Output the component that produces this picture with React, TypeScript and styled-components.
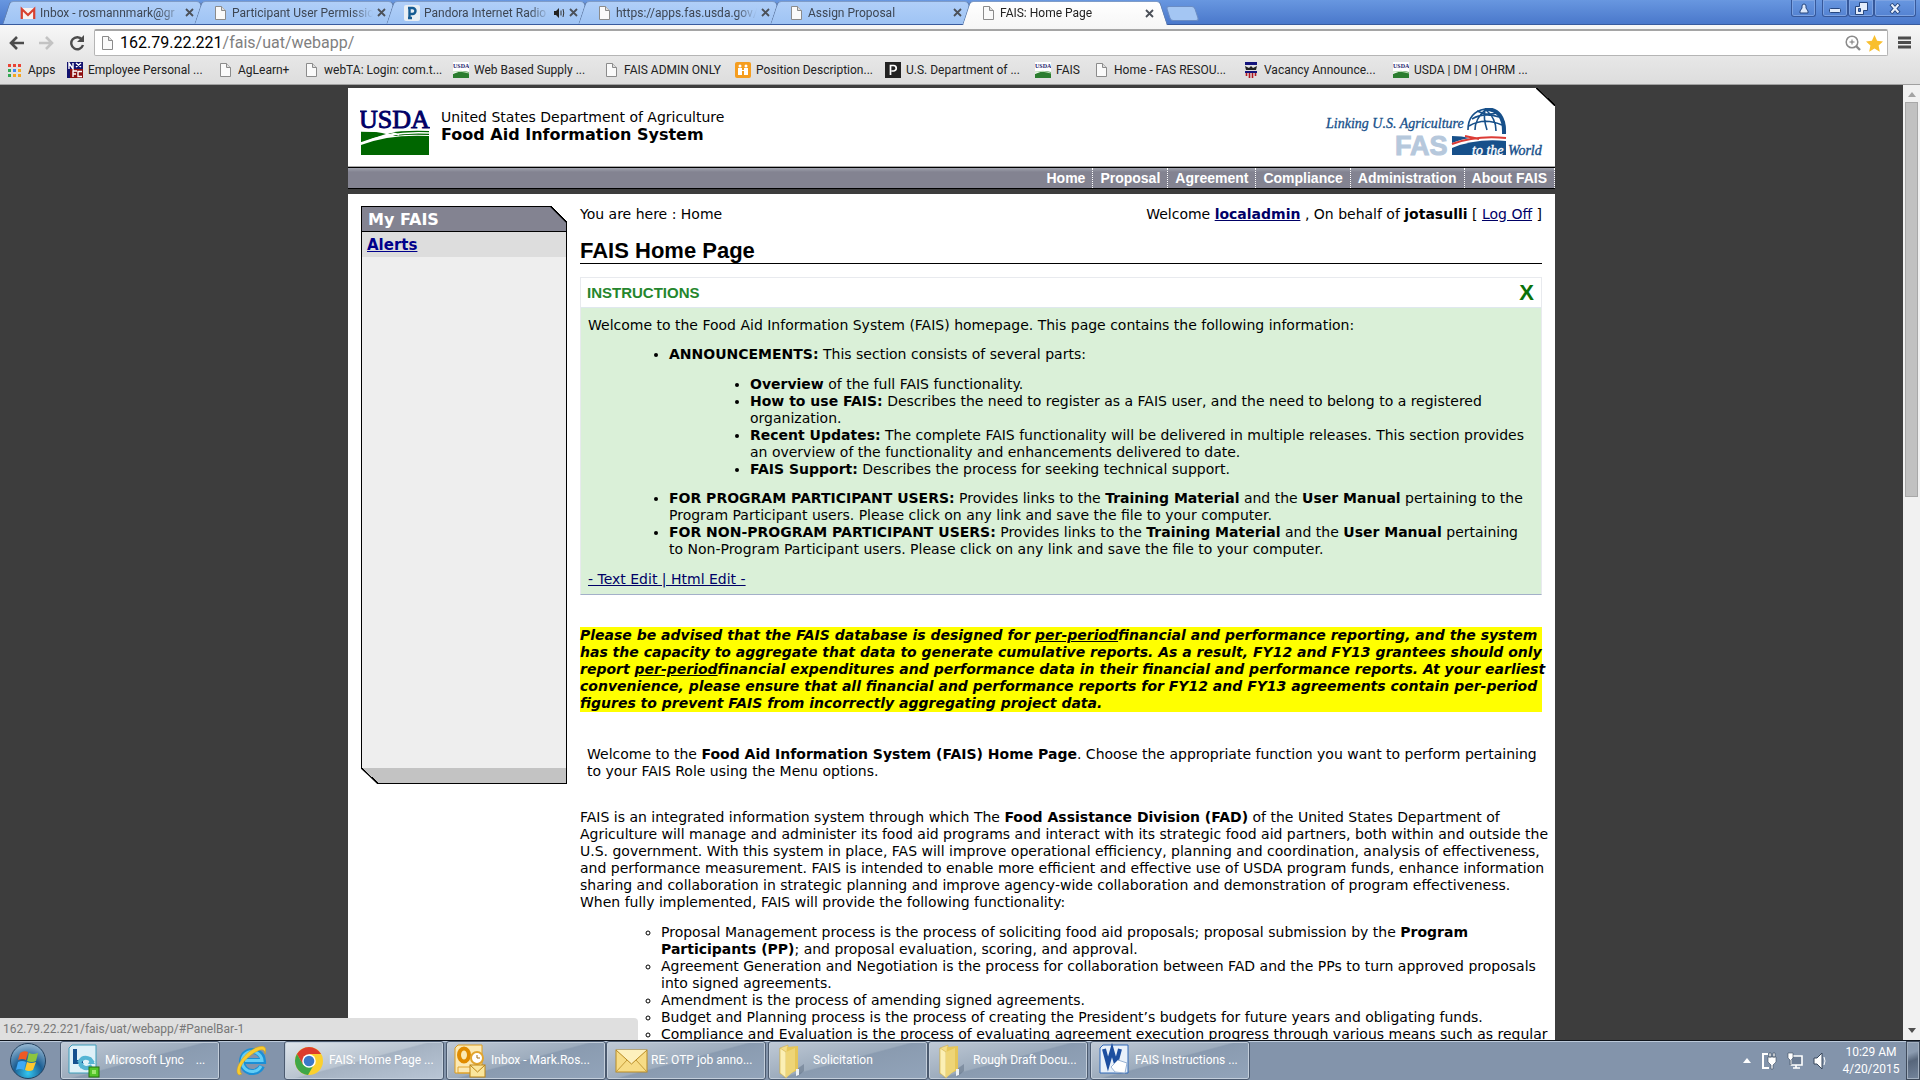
import React from 'react';
import styled, { createGlobalStyle, css } from 'styled-components';

const ui = 'Roboto, "Open Sans", sans-serif';
const verdana = '"DejaVu Sans", Verdana, sans-serif';
const arial = '"Liberation Sans", Arial, sans-serif';

const GlobalStyle = createGlobalStyle`
  * { box-sizing: border-box; }
  body { margin: 0; background: #3d3d3d; color: #000; overflow: hidden; }
  button { border: 0; padding: 0; margin: 0; background: none; font: inherit; color: inherit; }
  svg { display: block; flex: none; }
`;

const Desktop = styled.div`
  display: grid;
  grid-template-rows: auto minmax(0, 1fr) auto;
  height: 100vh;
`;

/* ---------- browser frame ---------- */
const TitleBar = styled.div`
  display: flex;
  justify-content: space-between;
  align-items: flex-start;
  height: 25px;
  padding-left: 6px;
  background: linear-gradient(#6897e0, #4a78cb);
  border-bottom: 1px solid #385b9e;
`;
const TabStrip = styled.div`
  display: flex;
  padding-top: 1px;
`;
const Tab = styled.button<{ $active?: boolean }>`
  position: relative;
  display: flex;
  align-items: center;
  width: 192px;
  height: ${p => (p.$active ? 24 : 23)}px;
  padding: 0 4px 0 14px;
  gap: 4px;
  z-index: ${p => (p.$active ? 2 : 0)};
  font: 12px ${ui};
  color: ${p => (p.$active ? '#222' : '#3d4653')};
  text-align: left;
  &::before, &::after {
    content: '';
    position: absolute;
    z-index: -1;
    top: 0;
    bottom: 0;
    width: 53%;
    background: ${p => (p.$active ? 'linear-gradient(#fff, #f7f7f7)' : 'linear-gradient(#b0cff8, #9fc4f4)')};
    border-top: 1px solid #7f9cc8;
  }
  &::before { left: 0; border-left: 1px solid #6580ab; border-radius: 4px 0 0 0; transform: skewX(-18deg); }
  &::after { right: -6px; border-right: 1px solid #6580ab; border-radius: 0 4px 0 0; transform: skewX(18deg); }
`;
const TabLabel = styled.span`
  flex: 1;
  overflow: hidden;
  white-space: nowrap;
  mask-image: linear-gradient(to right, #000 85%, transparent);
`;
const NewTab = styled.button`
  width: 29px;
  height: 15px;
  margin: 5px 0 0 10px;
  background: #a4c6f3;
  border: 1px solid #6a8cc4;
  border-radius: 3px;
  transform: skewX(18deg);
`;
const WindowButtons = styled.div`
  display: flex;
  padding-right: 4px;
`;
const WindowButton = styled.button<{ $w: number; $gap?: boolean }>`
  display: grid;
  place-items: center;
  width: ${p => p.$w}px;
  height: 17px;
  margin-right: ${p => (p.$gap ? 6 : 0)}px;
  border: 1px solid #36589a;
  border-top: 0;
  border-radius: 0 0 3px 3px;
  box-shadow: inset 0 0 0 1px #7da3e2;
`;
const Toolbar = styled.div`
  display: flex;
  align-items: center;
  height: 34px;
  padding: 1px 1px 0 5px;
  background: linear-gradient(#f7f7f7, #e6e6e6);
`;
const ToolButton = styled.button`
  display: grid;
  place-items: center;
  width: 29px;
  height: 26px;
`;
const NavButtons = styled.div`
  display: flex;
  gap: 2px;
  button:first-child { width: 24px; }
`;
const Omnibox = styled.label`
  display: flex;
  align-items: center;
  flex: 1;
  height: 27px;
  margin: 0 2px 0 3px;
  padding: 0 4px;
  gap: 5px;
  background: #fff;
  border: 1px solid #b5b5b5;
  border-top: 2px solid #a5a5a5;
  border-radius: 2px;
`;
const Address = styled.div`
  flex: 1;
  font: 16px/24px ${ui};
  color: #808080;
  outline: 0;
  b { font-weight: 400; color: #000; }
`;
const Bookmarks = styled.nav`
  display: flex;
  height: 26px;
  padding-left: 7px;
  background: linear-gradient(#e6e6e6, #dddddd);
  border-bottom: 1px solid #a0a0a0;
`;
const Bookmark = styled.a<{ $w: number }>`
  display: flex;
  align-items: center;
  gap: 5px;
  width: ${p => p.$w}px;
  height: 22px;
  font: 12px ${ui};
  color: #222;
  white-space: nowrap;
  text-decoration: none;
`;

/* ---------- viewport ---------- */
const Viewport = styled.div`
  display: flex;
  position: relative;
  background: #3d3d3d;
  overflow: hidden;
`;
const Canvas = styled.div`
  flex: 1;
  padding-top: 3px;
  overflow: hidden;
`;
const Scrollbar = styled.div`
  display: flex;
  flex-direction: column;
  align-items: center;
  width: 17px;
  padding: 7px 1px;
  background: #f1f1f1;
`;
const ScrollThumb = styled.div`
  align-self: stretch;
  height: 42%;
  margin: 5px 1px auto;
  background: #c1c1c1;
  border: 1px solid #a8a8a8;
`;
const Triangle = styled.i<{ $down?: boolean }>`
  border: 4px solid transparent;
  ${p => (p.$down ? 'border-top: 5px solid #505050; border-bottom: 0;' : 'border-bottom: 5px solid #a3a3a3; border-top: 0;')}
`;
const StatusBubble = styled.div`
  position: absolute;
  left: 0;
  bottom: 0;
  width: 638px;
  height: 22px;
  padding-left: 3px;
  background: #dfdfdf;
  border-radius: 0 4px 0 0;
  font: 12px/22px ${ui};
  color: #777;
`;
const Site = styled.div`
  max-width: 1207px;
  margin: 0 auto;
  font: 14px/17px ${verdana};
`;
const Header = styled.header`
  display: flex;
  justify-content: space-between;
  align-items: flex-start;
  height: 79px;
  padding: 20px 12px 0;
  background:
    linear-gradient(to bottom left, #3d3d3d calc(50% - 1px), #000 calc(50% - 1px), #000 50%, #fff calc(50% + 1px)) top right / 19px 18px no-repeat,
    #fff;
  border-bottom: 1px solid #aaa;
`;
const Brand = styled.div`
  display: flex;
  gap: 11px;
`;
const BrandText = styled.div`
  font-size: 14px;
  line-height: 18px;
  strong { display: block; font-size: 16px; }
`;
const SiteNav = styled.nav`
  display: flex;
  justify-content: flex-end;
  height: 22px;
  background: linear-gradient(#a0a3ae, #838391 4px);
  border: solid #000;
  border-width: 1px 0;
  a {
    padding: 0 7px;
    border-right: 1px dotted #fff;
    font: bold 14px/20px ${arial};
    color: #fff;
    text-decoration: none;
  }
`;
const Body = styled.div`
  display: grid;
  grid-template-columns: 206px minmax(0, 1fr);
  align-items: start;
  gap: 13px;
  min-height: 900px;
  margin-top: 5px;
  padding: 12px 13px 12px;
  background: #fff;
`;
const Panel = styled.aside`
  display: flex;
  flex-direction: column;
  height: 578px;
  font-weight: bold;
`;
const PanelTitle = styled.h2`
  margin: 0;
  padding: 5px 6px 0;
  height: 26px;
  border: 1px solid #000;
  font-size: 16px;
  line-height: 18px;
  color: #fff;
  border-right: 0;
  border-top: 0;
  background:
    linear-gradient(to bottom left, #fff calc(50% - 1px), #000 calc(50% - 1px), #000 50%, transparent calc(50% + 1px)) top right / 17px 17px no-repeat,
    linear-gradient(#000, #000) top left / calc(100% - 17px) 1px no-repeat,
    linear-gradient(#000, #000) bottom right / 1px 9px no-repeat,
    #838391;
`;
const PanelBody = styled.div`
  flex: 1;
  border: solid #000;
  border-width: 0 1px;
  background: #eee;
  a {
    display: block;
    height: 25px;
    padding-left: 5px;
    background: #ddd;
    font-size: 15px;
    line-height: 26px;
    color: #00008b;
  }
`;
const PanelFoot = styled.div`
  height: 16px;
  background:
    linear-gradient(to bottom left, transparent calc(50% - 1px), #000 calc(50% - 1px), #000 50%, #fff calc(50% + 1px)) top left / 17px 16px no-repeat,
    linear-gradient(#000, #000) bottom right / calc(100% - 17px) 1px no-repeat,
    linear-gradient(#000, #000) top right / 1px 100% no-repeat,
    #c3c3c3;
`;
const linkColor = css`a { color: #000066; }`;
const Crumbs = styled.div`
  display: flex;
  justify-content: space-between;
  ${linkColor}
`;
const Title = styled.h1`
  margin: 13px 0 13px;
  height: 28px;
  border-bottom: 1px solid #000;
  font: bold 22px/30px ${arial};
`;
const Instructions = styled.section`
  border: 1px solid #e8eaee;
  border-bottom: 1px solid #a3b0c8;
  background: #daf0d8;
`;
const InstructionsHead = styled.div`
  display: flex;
  justify-content: space-between;
  align-items: center;
  height: 30px;
  padding: 0 7px 0 6px;
  background: #fff;
  border-bottom: 1px solid #dfe8ee;
  color: #25862d;
  h2 { margin: 0; font: bold 15px/20px ${arial}; }
  button { font: bold 22px/22px ${arial}; color: #0a720a; }
`;
const InstructionsBody = styled.div`
  padding: 9px 7px 6px;
  ${linkColor}
`;
const List = styled.ul<{ $hollow?: boolean; $nested?: boolean }>`
  margin: ${p => (p.$nested ? '13px 0 12px' : p.$hollow ? '12px -10px 13px 0' : '12px 0 13px')};
  padding-left: 81px;
  list-style: ${p => (p.$hollow ? 'circle' : 'disc')};
`;
const Paragraph = styled.p<{ $inset?: boolean }>`
  margin: ${p => (p.$inset ? '34px 0 29px 7px' : '0 -10px 13px 0')};
`;
const Notice = styled.p`
  margin: 32px -6px 34px 0;
  background: linear-gradient(#ff0, #ff0) 0 0 / calc(100% - 6px) 100% no-repeat;
  font-weight: bold;
  font-style: italic;
`;

/* ---------- taskbar ---------- */
const Taskbar = styled.footer`
  display: flex;
  height: 40px;
  background: #8394ab;
  border-top: 1px solid #10151d;
  box-shadow: inset 0 1px 0 #bccadb;
  font: 12px/17px ${ui};
  color: #fff;
`;
const Launcher = styled.button<{ $wide?: boolean }>`
  display: grid;
  place-items: center;
  width: ${p => (p.$wide ? 62 : 60)}px;
  padding-right: ${p => (p.$wide ? 2 : 4)}px;
`;
const TaskButton = styled.button<{ $active?: boolean; $grouped?: boolean }>`
  display: flex;
  align-items: center;
  gap: 2px;
  width: 160px;
  margin-right: ${p => (p.$grouped ? 0 : 2)}px;
  padding-left: 6px;
  border: 1px solid #4b5a6f;
  border-radius: 3px;
  box-shadow: inset 0 0 0 1px #c3cedb;
  white-space: pre;
  background: ${p =>
    p.$active
      ? 'linear-gradient(165deg, #dfe5eb 0, #b9c4d0 48%, #a5b2c2 50%, #b8c5d5 100%)'
      : 'linear-gradient(165deg, #c0cad6 0, #9dacbd 48%, #8a9bb0 50%, #92a4ba 100%)'};
`;
const Tray = styled.div`
  display: flex;
  align-items: center;
  gap: 10px;
  margin-left: auto;
`;
const Clock = styled.div`
  width: 64px;
  text-align: center;
`;
const ShowDesktop = styled.button`
  align-self: stretch;
  width: 14px;
  margin-left: -7px;
  border: 1px solid #3e4a5b;
  box-shadow: inset 0 0 0 1px #a3b0c0;
  background: linear-gradient(160deg, #8b9bb0 0 30%, #57667b 50%, #74859c);
`;

/* ---------- icons ---------- */
const PageIcon = () => (
  <svg width="16" height="16" viewBox="0 0 16 16"><path d="M3.500 1.500h6l4 4v9h-10z" fill="#fafafa" stroke="#8b8b8b" /><path d="M9.500 1.500v4h4" fill="#ddd" stroke="#8b8b8b" /></svg>
);
const GmailIcon = () => (
  <svg width="16" height="16" viewBox="0 0 16 16"><path d="M1 3h14v11H1z" fill="#f5f1f0" /><path d="M1.800 14V4l6.200 6 6.200-6v10" fill="none" stroke="#d8402f" strokeWidth="2.200" /></svg>
);
const PandoraIcon = () => (
  <svg width="16" height="16" viewBox="0 0 16 16"><rect width="16" height="16" rx="2" fill="#e8eef4" /><path d="M5.500 13V3h3a3 3 0 0 1 0 6h-3M4 13h4M4 3h2" fill="none" stroke="#155b92" strokeWidth="2.400" /></svg>
);
const UsdaIcon = () => (
  <svg width="16" height="16" viewBox="0 0 16 16"><rect width="16" height="16" fill="#fff" /><text x="0" y="6" fontSize="6" fontWeight="bold" fontFamily="Liberation Serif" fill="#1b1b6d">USDA</text><path d="M0 12q8-4 16-2v6H0z" fill="#2b7d2f" /><path d="M0 10q8-2 16 1" stroke="#b6dcb0" fill="none" /></svg>
);
const NfcIcon = () => (
  <svg width="16" height="16" viewBox="0 0 16 16"><rect width="16" height="16" fill="#12126e" /><path d="M3 7h13v9H3z" fill="#8d1010" /><path d="M2 7V1l4 6V1M6 15V9h4M6 12h3M15 9.500h-4v5h4M9 1l5 4M9 5l5-4" stroke="#fff" strokeWidth="1.400" fill="none" /></svg>
);
const PositionIcon = () => (
  <svg width="16" height="16" viewBox="0 0 16 16"><rect width="16" height="16" rx="2" fill="#f59d1f" /><circle cx="5" cy="4" r="1.500" fill="#fff" /><circle cx="11" cy="4" r="1.500" fill="#fff" /><path d="M3 6h4v7H3zM9 6h4v7H9zM6 8h4v1H6z" fill="#fff" /></svg>
);
const DarkPIcon = () => (
  <svg width="16" height="16" viewBox="0 0 16 16"><rect width="16" height="16" fill="#222" /><path d="M5.500 13V3.500h3a2.500 2.500 0 0 1 0 5.500h-2" fill="none" stroke="#fff" strokeWidth="1.700" /></svg>
);
const EagleIcon = () => (
  <svg width="16" height="16" viewBox="0 0 16 16"><path d="M2 0h12v3H2z" fill="#14147c" /><path d="M2 4l4 2 2-2 2 2 4-2-1 4H3z" fill="#222" /><path d="M2 9h12v2H2z" fill="#14147c" /><path d="M3.500 11v3M6.500 11v5M9.500 11v5M12.500 11v3" stroke="#b01622" strokeWidth="1.600" /></svg>
);
const AppsIcon = () => (
  <svg width="16" height="16" viewBox="0 0 16 16">
    {['#e94335', '#e94335', '#e94335', '#34a853', '#4285f4', '#f5a623', '#34a853', '#f5a623', '#f5a623'].map((c, i) => (
      <rect key={i} x={1 + (i % 3) * 5} y={2 + Math.floor(i / 3) * 5} width="3" height="3" fill={c} />
    ))}
  </svg>
);
const CloseIcon = () => (
  <svg width="9" height="9" viewBox="0 0 9 9"><path d="M1 1l7 7M8 1l-7 7" stroke="#4b5058" strokeWidth="1.800" /></svg>
);
const SpeakerIcon = () => (
  <svg width="12" height="12" viewBox="0 0 12 12"><path d="M1 4h2l3-3v10L3 8H1z" fill="#222" /><path d="M8 3.500v5M10 2q1.500 4 0 8" stroke="#333" fill="none" /></svg>
);
const FolderIcon = () => (
  <svg width="36" height="36" viewBox="0 0 36 36"><path d="M22 34l7-6v-7l-7 5z" fill="#5f6f84" opacity=".5" /><path d="M5 5l8-3v26l-8 3z" fill="#f3dd8a" stroke="#cfae4d" strokeWidth=".6" /><path d="M12 4l11-1v24l-13 6-1-2z" fill="#e6c658" /><path d="M5 5l6 4v26l-6-5z" fill="#fbefb5" stroke="#d0ae47" strokeWidth=".6" /><path d="M11 9l9-4v22l-9 8z" fill="#eed577" /><path d="M21 26h3v6l-3 1z" fill="#eef2f6" /></svg>
);
const Envelope = () => (
  <svg width="36" height="36" viewBox="0 0 36 36"><rect x="3" y="7" width="31" height="22" fill="#f7dc86" stroke="#b88b24" /><path d="M3 29l11-12M34 29L23 17" stroke="#c59c3a" /><path d="M3 7l15.500 14L34 7" fill="#fdf0bd" stroke="#b88b24" /></svg>
);
const LyncIcon = () => (
  <svg width="36" height="36" viewBox="0 0 36 36"><path d="M5 2h24v28H2V5z" fill="#dff1f8" stroke="#3c9dba" /><path d="M8 6v13h8" stroke="#15508f" strokeWidth="4" fill="none" /><path d="M12 20q4-8 11-4l3 4M13 21q5 7 12 2" stroke="#55b5d4" strokeWidth="4" fill="none" /><path d="M24 15l4 6h-7zM14 26l-3-6h6z" fill="#55b5d4" /><rect x="22" y="24" width="10" height="10" fill="#53c52a" stroke="#247110" /><rect x="25" y="27" width="4" height="4" fill="#9ce66f" /></svg>
);
const OutlookIcon = () => (
  <svg width="36" height="36" viewBox="0 0 36 36"><path d="M5 2h24v28H2V5z" fill="#fbe9b4" stroke="#dc9b1d" /><ellipse cx="11" cy="12" rx="5" ry="6.500" fill="none" stroke="#e08b00" strokeWidth="4" /><path d="M5 24h13v6H5z" fill="none" stroke="#e2a52f" /><circle cx="24" cy="15" r="6" fill="#fff" stroke="#e2a52f" strokeWidth="2" /><path d="M24 12v3h3" stroke="#a76c0e" fill="none" /><rect x="17" y="22" width="15" height="12" fill="#fbe69c" stroke="#bb8416" /><path d="M17 22l7.500 7 7.500-7" fill="none" stroke="#bb8416" /></svg>
);
const WordIcon = () => (
  <svg width="36" height="36" viewBox="0 0 36 36"><path d="M6 2h25v28H3V5z" fill="#e9f1fa" stroke="#2f68b8" /><path d="M7 6l4 15 4-14 4 14 4-15" fill="none" stroke="#1d4fa0" strokeWidth="4" /><path d="M21 17l9 3-2 10-10-1-4-5z" fill="#fff" stroke="#9ab3d4" /></svg>
);
const ChromeIcon = () => (
  <svg width="36" height="36" viewBox="-2 -2 36 36"><circle cx="16" cy="16" r="14" fill="#fbd02e" /><path d="M16 9h12.100A14 14 0 0 0 3.900 9l6 10.500z" fill="#dd3b2d" /><path d="M3.900 9A14 14 0 0 0 15 30l6-10.500-11 0z" fill="#3fa648" /><circle cx="16" cy="16" r="6.800" fill="#fff" /><circle cx="16" cy="16" r="5.300" fill="#3c79c9" /></svg>
);
const IeIcon = () => (
  <svg width="36" height="36" viewBox="0 0 36 36"><path d="M28 23a10.500 10.500 0 1 1 1-5H11" fill="none" stroke="#1b8fd6" strokeWidth="6" /><path d="M27 23a10 10 0 1 1 1-5.500H11" fill="none" stroke="#63cdf5" strokeWidth="3" /><path d="M5 32C-2 28 10 8 24 4q10-3 7 7c0-6-5-5-11-1C9 17 3 27 8 31z" fill="#f8cb2f" stroke="#d59d11" strokeWidth=".5" /></svg>
);
const StartOrb = () => (
  <svg width="38" height="38" viewBox="0 0 38 38">
    <defs><radialGradient id="orb" cx=".5" cy=".85" r=".9"><stop offset="0" stopColor="#33c7f0" /><stop offset=".45" stopColor="#1c5f94" /><stop offset="1" stopColor="#a9c5dc" /></radialGradient></defs>
    <circle cx="19" cy="19" r="17.500" fill="url(#orb)" stroke="#23415f" />
    <path d="M11 11q4-3 8-1l-2 8q-4-2-8 0z" fill="#ee5a24" /><path d="M20 11q4 2 9 0l-2 8q-4 2-9 0z" fill="#8dc63f" /><path d="M9 20q4-2 8 0l-2 8q-4-2-8 0z" fill="#3fa9f5" /><path d="M18 20q4 2 9 0l-3 8q-4 2-8 0z" fill="#fdc82f" />
  </svg>
);
const UsdaLogo = () => (
  <svg width="70" height="48" viewBox="0 0 70 48" role="img" aria-label="USDA">
    <text x="-1" y="20" fontFamily="Liberation Serif" fontSize="26" fill="#000066" stroke="#000066" strokeWidth=".9">USDA</text>
    <path d="M1 23q16 0 25 3-10 3-25 9z" fill="#006600" /><path d="M28 25q16-3 41-2v4q-20-1-34 1z" fill="#006600" />
    <path d="M1 23q30 0 38 4M1 35q30-12 68-10" stroke="#fff" fill="none" strokeWidth="1.500" />
    <path d="M1 37q28-11 68-9v19H1z" fill="#006600" />
  </svg>
);
const FasLogo = () => (
  <svg width="218" height="48" viewBox="0 0 218 48" role="img" aria-label="Linking U.S. Agriculture to the World">
    <g fontFamily="Liberation Serif" fontStyle="italic" fill="#17508a">
      <text x="1" y="20" fontSize="14" stroke="#17508a" strokeWidth=".3">Linking U.S. Agriculture</text>
    </g>
    <text x="70" y="47" fontFamily="Liberation Sans" fontWeight="bold" fontSize="27" fill="#b6c8dc" stroke="#b6c8dc">FAS</text>
    <g fill="none" stroke="#17508a">
      <path d="M143 22Q143 4 160 1q21 1 20 25" strokeWidth="1.600" />
      <path d="M160 1q20 0 19 25" strokeWidth="4" />
      <path d="M160 2q-10 9-10 20M160 2q-2 8 2 20M161 2q10 8 10 21M147 11q12-7 27-2M144 18q15-9 33-1M152 3q10 5 20 2" strokeWidth="1.600" />
    </g>
    <path d="M127 28q10 0 18 2-8 1-18 5z" fill="#17508a" />
    <path d="M127 40q24-10 54-7v14h-54z" fill="#17508a" />
    <path d="M127 36q24-9 54-6M140 28q10 2 14 3" stroke="#dc3b35" strokeWidth="2" fill="none" />
    <g fontFamily="Liberation Serif" fontStyle="italic" fontSize="14" strokeWidth=".4">
      <text x="147" y="47" fill="#fff" stroke="#fff">to the</text>
      <text x="183" y="47" fill="#17508a" stroke="#17508a">World</text>
    </g>
  </svg>
);

const tabs = [
  { label: 'Inbox - rosmannmark@gr', icon: <GmailIcon /> },
  { label: 'Participant User Permissio', icon: <PageIcon /> },
  { label: 'Pandora Internet Radio', icon: <PandoraIcon />, audio: true },
  { label: 'https://apps.fas.usda.gov/', icon: <PageIcon /> },
  { label: 'Assign Proposal', icon: <PageIcon /> },
  { label: 'FAIS: Home Page', icon: <PageIcon />, active: true },
];
const bookmarks = [
  { label: 'Apps', w: 60, icon: <AppsIcon /> },
  { label: 'Employee Personal ...', w: 150, icon: <NfcIcon /> },
  { label: 'AgLearn+', w: 86, icon: <PageIcon /> },
  { label: 'webTA: Login: com.t...', w: 150, icon: <PageIcon /> },
  { label: 'Web Based Supply ...', w: 150, icon: <UsdaIcon /> },
  { label: 'FAIS ADMIN ONLY', w: 132, icon: <PageIcon /> },
  { label: 'Position Description...', w: 150, icon: <PositionIcon /> },
  { label: 'U.S. Department of ...', w: 150, icon: <DarkPIcon /> },
  { label: 'FAIS', w: 58, icon: <UsdaIcon /> },
  { label: 'Home - FAS RESOU...', w: 150, icon: <PageIcon /> },
  { label: 'Vacancy Announce...', w: 150, icon: <EagleIcon /> },
  { label: 'USDA | DM | OHRM ...', w: 150, icon: <UsdaIcon /> },
];
const siteLinks = ['Home', 'Proposal', 'Agreement', 'Compliance', 'Administration', 'About FAIS'];

const Browser = () => (
  <div>
    <TitleBar>
      <TabStrip>
        {tabs.map(t => (
          <Tab key={t.label} $active={t.active}>
            {t.icon}
            <TabLabel>{t.label}</TabLabel>
            {t.audio && <SpeakerIcon />}
            <CloseIcon />
          </Tab>
        ))}
        <NewTab aria-label="New tab" />
      </TabStrip>
      <WindowButtons>
        <WindowButton $w={25} $gap aria-label="User"><svg width="10" height="11" viewBox="0 0 10 11"><path d="M3 3a2 2 0 0 1 4 0v2l2 3v2H1V8l2-3z" fill="#dce8fa" stroke="#27477f" /></svg></WindowButton>
        <WindowButton $w={26} aria-label="Minimize"><svg width="12" height="11" viewBox="0 0 12 11"><rect x=".5" y="5.500" width="11" height="4" rx="1" fill="#e4edfb" stroke="#27477f" /></svg></WindowButton>
        <WindowButton $w={26} aria-label="Restore"><svg width="13" height="13" viewBox="0 0 13 13"><path d="M4.500.5h8v8h-4v4h-8v-8h4z" fill="#e4edfb" stroke="#27477f" /><path d="M3.500 6.500h2v3h-2z" fill="#4a78cb" stroke="#27477f" /></svg></WindowButton>
        <WindowButton $w={42} aria-label="Close"><svg width="12" height="11" viewBox="0 0 12 11"><path d="M2 1l8 9M10 1l-8 9" stroke="#27477f" strokeWidth="4" /><path d="M2.500 1.500l7 8M9.500 1.500l-7 8" stroke="#e9f0fc" strokeWidth="2" /></svg></WindowButton>
      </WindowButtons>
    </TitleBar>
    <Toolbar>
      <NavButtons>
        <ToolButton aria-label="Back"><svg width="16" height="16" viewBox="0 0 16 16"><path d="M15 8H3M8 2L2 8l6 6" stroke="#4c4c4c" strokeWidth="2.600" fill="none" /></svg></ToolButton>
        <ToolButton aria-label="Forward"><svg width="16" height="16" viewBox="0 0 16 16"><path d="M1 8h12M8 2l6 6-6 6" stroke="#c3c3c3" strokeWidth="2.600" fill="none" /></svg></ToolButton>
        <ToolButton aria-label="Reload"><svg width="16" height="16" viewBox="0 0 16 16"><path d="M13 4.500A6 6 0 1 0 14 10" stroke="#4c4c4c" strokeWidth="2.400" fill="none" /><path d="M15 0v7H8z" fill="#4c4c4c" /></svg></ToolButton>
      </NavButtons>
      <Omnibox>
        <PageIcon />
        <Address role="textbox" aria-label="Address"><b>162.79.22.221</b>/fais/uat/webapp/</Address>
        <svg width="16" height="16" viewBox="0 0 16 16"><circle cx="7" cy="7" r="5.800" stroke="#8a8a8a" strokeWidth="1.500" fill="none" /><path d="M7 4.500v5M4.500 7h5" stroke="#777" /><path d="M11 11l4 4" stroke="#8a8a8a" strokeWidth="2.400" /></svg>
        <svg width="17" height="17" viewBox="0 0 17 17"><path d="M8.500 0l2.600 5.700 5.900.7-4.400 4.200 1.200 6.200-5.300-3.200-5.300 3.200 1.200-6.200L0 6.400l5.900-.7z" fill="#f9bf2d" /></svg>
      </Omnibox>
      <ToolButton aria-label="Menu"><svg width="13" height="13" viewBox="0 0 13 13"><path d="M0 2h13M0 6.500h13M0 11h13" stroke="#4c4c4c" strokeWidth="3" /></svg></ToolButton>
    </Toolbar>
    <Bookmarks>
      {bookmarks.map(b => <Bookmark key={b.label} href="#" $w={b.w}>{b.icon}{b.label}</Bookmark>)}
    </Bookmarks>
  </div>
);

const Sidebar = () => (
  <Panel>
    <PanelTitle>My FAIS</PanelTitle>
    <PanelBody><a href="#alerts">Alerts</a></PanelBody>
    <PanelFoot />
  </Panel>
);

const HomePage = () => (
  <main>
    <Crumbs>
      <span>You are here : Home</span>
      <span>Welcome <a href="#user"><b>localadmin</b></a> , On behalf of <b>jotasulli</b> [ <a href="#logoff">Log Off</a> ]</span>
    </Crumbs>
    <Title>FAIS Home Page</Title>
    <Instructions>
      <InstructionsHead><h2>INSTRUCTIONS</h2><button aria-label="Close instructions">X</button></InstructionsHead>
      <InstructionsBody>
        Welcome to the Food Aid Information System (FAIS) homepage. This page contains the following information:
        <List>
          <li><b>ANNOUNCEMENTS:</b> This section consists of several parts:
            <List $nested>
              <li><b>Overview</b> of the full FAIS functionality.</li>
              <li><b>How to use FAIS:</b> Describes the need to register as a FAIS user, and the need to belong to a registered organization.</li>
              <li><b>Recent Updates:</b> The complete FAIS functionality will be delivered in multiple releases. This section provides an overview of the functionality and enhancements delivered to date.</li>
              <li><b>FAIS Support:</b> Describes the process for seeking technical support.</li>
            </List>
          </li>
          <li><b>FOR PROGRAM PARTICIPANT USERS:</b> Provides links to the <b>Training Material</b> and the <b>User Manual</b> pertaining to the Program Participant users. Please click on any link and save the file to your computer.</li>
          <li><b>FOR NON-PROGRAM PARTICIPANT USERS:</b> Provides links to the <b>Training Material</b> and the <b>User Manual</b> pertaining to Non-Program Participant users. Please click on any link and save the file to your computer.</li>
        </List>
        <a href="#edit">- Text Edit | Html Edit -</a>
      </InstructionsBody>
    </Instructions>
    <Notice>
      Please be advised that the FAIS database is designed for <u>per-period</u>financial and performance reporting, and the system has the capacity to aggregate that data to generate cumulative reports. As a result, FY12 and FY13 grantees should only report <u>per-period</u>financial expenditures and performance data in their financial and performance reports. At your earliest convenience, please ensure that all financial and performance reports for FY12 and FY13 agreements contain per-period figures to prevent FAIS from incorrectly aggregating project data.
    </Notice>
    <Paragraph $inset>Welcome to the <b>Food Aid Information System (FAIS) Home Page</b>. Choose the appropriate function you want to perform pertaining to your FAIS Role using the Menu options.</Paragraph>
    <Paragraph>FAIS is an integrated information system through which The <b>Food Assistance Division (FAD)</b> of the United States Department of Agriculture will manage and administer its food aid programs and interact with its strategic food aid partners, both within and outside the U.S. government. With this system in place, FAS will improve operational efficiency, planning and coordination, analysis of effectiveness, and performance measurement. FAIS is intended to enable more efficient and effective use of USDA program funds, enhance information sharing and collaboration in strategic planning and improve agency-wide collaboration and demonstration of program effectiveness. When fully implemented, FAIS will provide the following functionality:</Paragraph>
    <List $hollow>
      <li>Proposal Management process is the process of soliciting food aid proposals; proposal submission by the <b>Program Participants (PP)</b>; and proposal evaluation, scoring, and approval.</li>
      <li>Agreement Generation and Negotiation is the process for collaboration between FAD and the PPs to turn approved proposals into signed agreements.</li>
      <li>Amendment is the process of amending signed agreements.</li>
      <li>Budget and Planning process is the process of creating the President’s budgets for future years and obligating funds.</li>
      <li>Compliance and Evaluation is the process of evaluating agreement execution progress through various means such as regular</li>
    </List>
  </main>
);

export default function App() {
  return (
    <Desktop>
      <GlobalStyle />
      <Browser />
      <Viewport>
        <Canvas>
          <Site>
            <Header>
              <Brand>
                <UsdaLogo />
                <BrandText>United States Department of Agriculture<strong>Food Aid Information System</strong></BrandText>
              </Brand>
              <FasLogo />
            </Header>
            <SiteNav>{siteLinks.map(l => <a key={l} href="#">{l}</a>)}</SiteNav>
            <Body>
              <Sidebar />
              <HomePage />
            </Body>
          </Site>
        </Canvas>
        <Scrollbar><Triangle /><ScrollThumb /><Triangle $down /></Scrollbar>
        <StatusBubble>162.79.22.221/fais/uat/webapp/#PanelBar-1</StatusBubble>
      </Viewport>
      <Taskbar>
        <Launcher aria-label="Start"><StartOrb /></Launcher>
        <TaskButton><LyncIcon />{'Microsoft Lync    ...'}</TaskButton>
        <Launcher $wide aria-label="Internet Explorer"><IeIcon /></Launcher>
        <TaskButton $active><ChromeIcon />FAIS: Home Page ...</TaskButton>
        <TaskButton $grouped><OutlookIcon />Inbox - Mark.Ros...</TaskButton>
        <TaskButton><Envelope />RE: OTP job anno...</TaskButton>
        <TaskButton $grouped><FolderIcon />Solicitation</TaskButton>
        <TaskButton><FolderIcon />Rough Draft Docu...</TaskButton>
        <TaskButton><WordIcon />FAIS Instructions ...</TaskButton>
        <Tray>
          <svg width="8" height="5" viewBox="0 0 8 5"><path d="M0 5l4-5 4 5z" fill="#fff" /></svg>
          <svg width="16" height="18" viewBox="0 0 16 18"><path d="M7 2H2v14h6" fill="none" stroke="#fff" strokeWidth="2" /><path d="M7 5h8v5l-3 3v4h-2v-4l-3-3zM8 1h2v4H8zM12 1h2v4h-2z" fill="#fff" stroke="#37475c" strokeWidth=".6" /></svg>
          <svg width="16" height="18" viewBox="0 0 16 18"><path d="M4 4h11v9H4zM6 16h7M9 13v3" fill="#6b7c93" stroke="#fff" strokeWidth="1.600" /><path d="M1 1h5v5l-2 2v5H3V8L1 6z" fill="#fff" stroke="#37475c" strokeWidth=".6" /></svg>
          <svg width="16" height="18" viewBox="0 0 16 18"><path d="M1 6h3l5-5v16l-5-5H1z" fill="#fff" stroke="#37475c" /><path d="M11 5q2 4 0 8" stroke="#fff" fill="none" /></svg>
          <Clock>10:29 AM<br />4/20/2015</Clock>
          <ShowDesktop aria-label="Show desktop" />
        </Tray>
      </Taskbar>
    </Desktop>
  );
}
